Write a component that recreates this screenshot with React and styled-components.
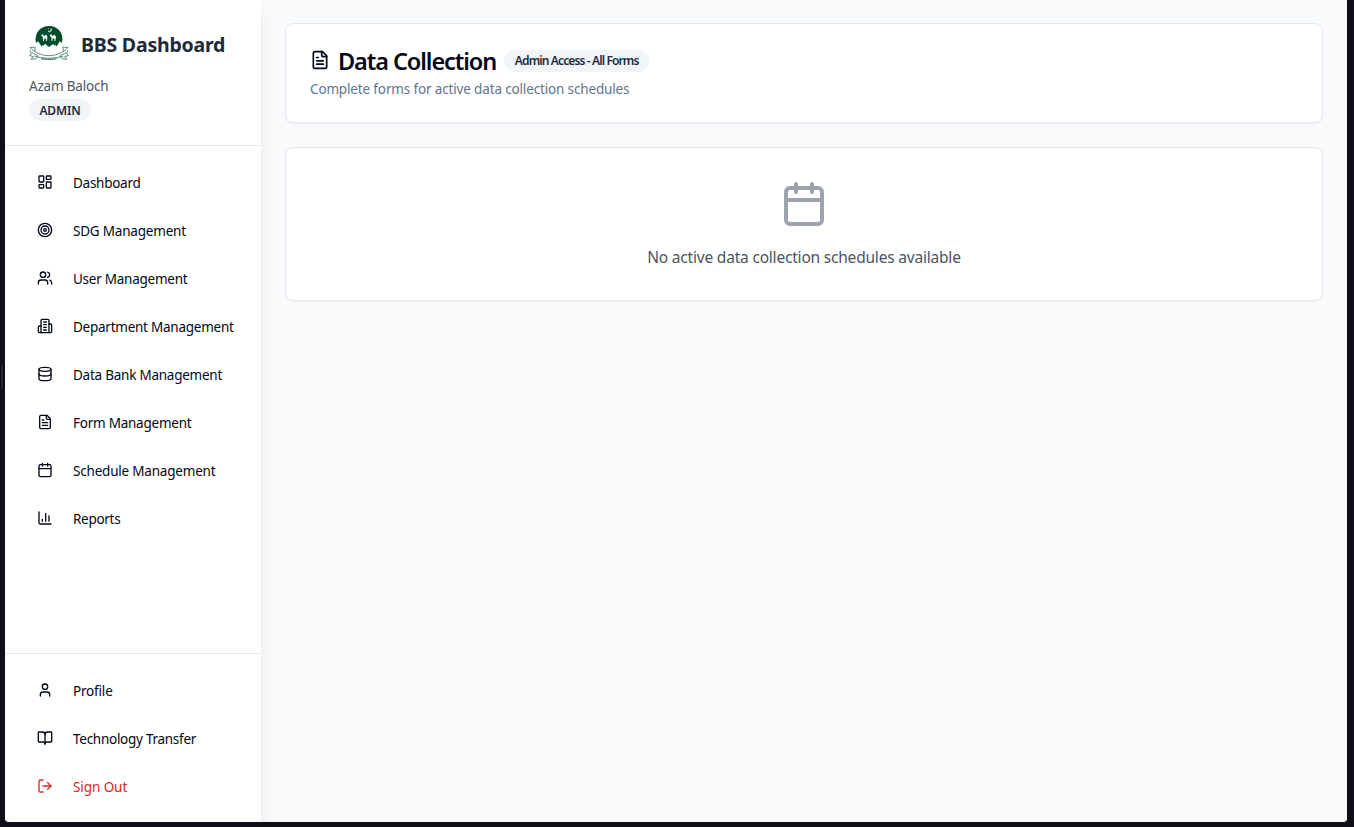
import React from 'react';
import styled, { createGlobalStyle } from 'styled-components';

const GlobalStyle = createGlobalStyle`
  *, *::before, *::after { box-sizing: border-box; }
  body {
    margin: 0;
    background: #0e0e17;
    color: #020817;
    font-family: 'Segoe UI', 'Noto Sans', 'Open Sans', sans-serif;
  }
  h1, h2, p { margin: 0; }
`;

const Frame = styled.div`
  height: 827px;
  padding: 0 7px 5px 5px;
  position: relative;
  overflow: hidden;
`;

const EdgeHandle = styled.span`
  position: absolute;
  left: 1px;
  top: 365px;
  width: 2px;
  height: 24px;
  background: #25252f;
`;

const Shell = styled.div`
  display: flex;
  height: 822px;
  border-radius: 0 0 4px 4px;
  overflow: hidden;
  background: #f9fafb;
`;

const Sidebar = styled.aside`
  width: 256px;
  flex: none;
  display: flex;
  flex-direction: column;
  background: #fff;
  box-shadow: 0 10px 15px -3px rgba(0, 0, 0, 0.1), 0 4px 6px -4px rgba(0, 0, 0, 0.1);
  z-index: 1;
`;

const Brand = styled.div`
  height: 146px;
  padding: 24px 24px 0;
  border-bottom: 1px solid #e5e7eb;
`;

const BrandRow = styled.div`
  display: flex;
  align-items: center;
  gap: 12px;
  height: 40px;
`;

const Line = styled.span`
  display: block;
  white-space: nowrap;
  font-size: ${(p) => p.$size}px;
  line-height: ${(p) => p.$lh || 20}px;
  font-weight: ${(p) => p.$weight || 400};
  letter-spacing: ${(p) => p.$ls || 0}px;
  color: ${(p) => p.$color || 'inherit'};
  padding-top: ${(p) => p.$drop || 0}px;
`;

const UserName = styled(Line)`
  margin-top: 12px;
`;

const Badge = styled.span`
  display: inline-flex;
  align-items: center;
  justify-content: center;
  width: ${(p) => p.$width}px;
  height: 22px;
  margin-top: ${(p) => p.$top || 0}px;
  border-radius: 11px;
  background: #f1f5f9;
  color: #1e293b;
`;

const Nav = styled.nav`
  display: flex;
  flex-direction: column;
  gap: 8px;
  padding: 17px 16px 0;
  flex: ${(p) => (p.$grow ? 1 : 'none')};
`;

const Footer = styled(Nav)`
  height: 169px;
  border-top: 1px solid #e5e7eb;
`;

const NavItem = styled.a`
  display: flex;
  align-items: center;
  gap: 20px;
  height: 40px;
  padding: 0 16px;
  color: ${(p) => (p.$danger ? '#dc2626' : '#020817')};

  svg { flex: none; margin-top: -2px; }
`;

const Main = styled.main`
  flex: 1;
  display: flex;
  flex-direction: column;
  gap: 24px;
  padding: 23px 24px;
  background: #f9fafc;
`;

const Card = styled.section`
  border: 1px solid #e2e8f0;
  border-radius: 8px;
  background: #fff;
  box-shadow: 0 1px 2px rgba(0, 0, 0, 0.05);
`;

const HeaderCard = styled(Card)`
  height: 100px;
  padding: 24px;
`;

const TitleRow = styled.div`
  display: flex;
  align-items: center;
  gap: 8px;
  height: 25px;
  margin-bottom: 6px;

  > svg { flex: none; margin-top: -2px; }
`;

const EmptyCard = styled(Card)`
  height: 154px;
  padding: 32px 24px 0;
  display: flex;
  flex-direction: column;
  align-items: center;
  gap: 17px;
`;

const glyphs = {
  dashboard: (
    <>
      <rect width="7" height="9" x="3" y="3" rx="1" />
      <rect width="7" height="5" x="14" y="3" rx="1" />
      <rect width="7" height="9" x="14" y="12" rx="1" />
      <rect width="7" height="5" x="3" y="16" rx="1" />
    </>
  ),
  target: (
    <>
      <circle cx="12" cy="12" r="10" />
      <circle cx="12" cy="12" r="6" />
      <circle cx="12" cy="12" r="2" />
    </>
  ),
  users: (
    <>
      <path d="M16 21v-2a4 4 0 0 0-4-4H6a4 4 0 0 0-4 4v2" />
      <circle cx="9" cy="7" r="4" />
      <path d="M22 21v-2a4 4 0 0 0-3-3.87" />
      <path d="M16 3.13a4 4 0 0 1 0 7.75" />
    </>
  ),
  building: (
    <>
      <path d="M6 22V4a2 2 0 0 1 2-2h8a2 2 0 0 1 2 2v18Z" />
      <path d="M6 12H4a2 2 0 0 0-2 2v6a2 2 0 0 0 2 2h2" />
      <path d="M18 9h2a2 2 0 0 1 2 2v9a2 2 0 0 1-2 2h-2" />
      <path d="M10 6h4M10 10h4M10 14h4M10 18h4" />
    </>
  ),
  database: (
    <>
      <ellipse cx="12" cy="5" rx="9" ry="3" />
      <path d="M3 5v14a9 3 0 0 0 18 0V5" />
      <path d="M3 12a9 3 0 0 0 18 0" />
    </>
  ),
  file: (
    <>
      <path d="M15 2H6a2 2 0 0 0-2 2v16a2 2 0 0 0 2 2h12a2 2 0 0 0 2-2V7Z" />
      <path d="M14 2v4a2 2 0 0 0 2 2h4" />
      <path d="M10 9H8M16 13H8M16 17H8" />
    </>
  ),
  calendar: (
    <>
      <path d="M8 2v4M16 2v4" />
      <rect width="18" height="18" x="3" y="4" rx="2" />
      <path d="M3 10h18" />
    </>
  ),
  chart: (
    <>
      <path d="M3 3v16a2 2 0 0 0 2 2h16" />
      <path d="M18 17V9M13 17V5M8 17v-3" />
    </>
  ),
  user: (
    <>
      <circle cx="12" cy="7" r="4" />
      <path d="M19 21v-2a4 4 0 0 0-4-4H9a4 4 0 0 0-4 4v2" />
    </>
  ),
  book: (
    <>
      <path d="M12 7v14" />
      <path d="M3 18a1 1 0 0 1-1-1V4a1 1 0 0 1 1-1h5a4 4 0 0 1 4 4 4 4 0 0 1 4-4h5a1 1 0 0 1 1 1v13a1 1 0 0 1-1 1h-6a3 3 0 0 0-3 3 3 3 0 0 0-3-3z" />
    </>
  ),
  logout: (
    <>
      <path d="M9 21H5a2 2 0 0 1-2-2V5a2 2 0 0 1 2-2h4" />
      <path d="m16 17 5-5-5-5" />
      <path d="M21 12H9" />
    </>
  ),
};

const Icon = ({ name, size = 16, color = 'currentColor' }) => (
  <svg width={size} height={size} viewBox="0 0 24 24" fill="none" stroke={color}
    strokeWidth="2" strokeLinecap="round" strokeLinejoin="round" aria-hidden="true">
    {glyphs[name]}
  </svg>
);

const Emblem = () => (
  <svg width="40" height="40" viewBox="0 0 40 40" aria-hidden="true">
    <path d="M7 19C4.800 9 11.500 2 20 2s15.500 7 13 17l-2.200-1.800-3.300 5.300-2.200-3.200-5.300 3.700-4.800-3.700-2.700 3.300-3.300-5.400Z" fill="#064e2b" />
    <path d="m12.500 18 2 4 1.800-3 3.700 3 3.700-3 1.800 3 2-4-1.500-3H14Z" fill="#064e2b" />
    <path d="M12.500 10.500h1.700l.9 2 1-1.500 1.400 0 .9 2-.5 4h-.7l-.3-2.600h-1.600l-.5 2.600h-.7l-.2-3.400-1.600-2.200Z
      M21 10.500h1.700l.9 2 1-1.500 1.400 0 .9 2-.5 4h-.7l-.3-2.600h-1.600l-.5 2.600h-.7l-.2-3.400-1.600-2.200Z" fill="#fff" />
    <path d="M22 4.500a2 2 0 1 1-3 2.700 2.300 2.300 0 0 0 3-2.700M19.200 4.600h.8" fill="none" stroke="#d7e5dc" strokeWidth=".8" />
    <g fill="none" stroke="#3c7458" strokeWidth=".8">
      <path d="M3 25.500c10 8.200 24 8.200 34 0M5.500 32c9 3 20 3 29 0" />
      <path d="m3 25.500-2-2 5.200-.3-.7 4.300M37 25.500l2-2-5.200-.3.7 4.300" />
      <path d="m1 26 1.500 4-2 1.500 4 1.300-2.500 2.500 5-.6 2-2.600M39 26l-1.500 4 2 1.500-4 1.300 2.500 2.500-5-.6-2-2.600" />
      <path d="M3 28.500c2 1 3 2 6 3M37 28.500c-2 1-3 2-6 3" />
    </g>
    <path d="M12.500 34.700c5 .9 10 .9 15 0" fill="none" stroke="#0d5834" strokeWidth="1.300" strokeDasharray="1.400 .6" />
  </svg>
);

const mainItems = [
  ['dashboard', 'Dashboard', -0.27],
  ['target', 'SDG Management', -0.2],
  ['users', 'User Management', -0.25],
  ['building', 'Department Management', -0.25],
  ['database', 'Data Bank Management', -0.24],
  ['file', 'Form Management', -0.24],
  ['calendar', 'Schedule Management', -0.2],
  ['chart', 'Reports', -0.3],
];

const footerItems = [
  ['user', 'Profile', -0.18],
  ['book', 'Technology Transfer', -0.27],
  ['logout', 'Sign Out', -0.08, true],
];

const renderItem = ([icon, label, spacing, danger]) => (
  <NavItem key={label} $danger={danger}>
    <Icon name={icon} />
    <Line $size={13.5} $ls={spacing}>{label}</Line>
  </NavItem>
);

export default function App() {
  return (
    <Frame>
      <GlobalStyle />
      <EdgeHandle />
      <Shell>
        <Sidebar>
          <Brand>
            <BrandRow>
              <Emblem />
              <Line as="h2" $size={19.5} $lh={28} $weight={700} $ls={-0.22} $drop={2} $color="#1f2937">BBS Dashboard</Line>
            </BrandRow>
            <UserName $size={13.5} $ls={-0.2} $color="#4b5563">Azam Baloch</UserName>
            <Badge $width={62} $top={3}>
              <Line $size={12} $lh={16} $weight={600} $ls={-0.15} $drop={2}>ADMIN</Line>
            </Badge>
          </Brand>
          <Nav $grow>{mainItems.map(renderItem)}</Nav>
          <Footer>{footerItems.map(renderItem)}</Footer>
        </Sidebar>
        <Main>
          <HeaderCard>
            <TitleRow>
              <Icon name="file" size={20} />
              <Line as="h1" $size={23.5} $lh={24} $weight={600} $ls={-1.08}>Data Collection</Line>
              <Badge $width={145}>
                <Line $size={12} $lh={16} $weight={600} $ls={-0.88}>Admin Access - All Forms</Line>
              </Badge>
            </TitleRow>
            <Line $size={13.5} $ls={-0.15} $color="#64748b">Complete forms for active data collection schedules</Line>
          </HeaderCard>
          <EmptyCard>
            <Icon name="calendar" size={48} color="#9ca3af" />
            <Line $size={15.5} $lh={24} $ls={-0.2} $color="#4b5563">No active data collection schedules available</Line>
          </EmptyCard>
        </Main>
      </Shell>
    </Frame>
  );
}
